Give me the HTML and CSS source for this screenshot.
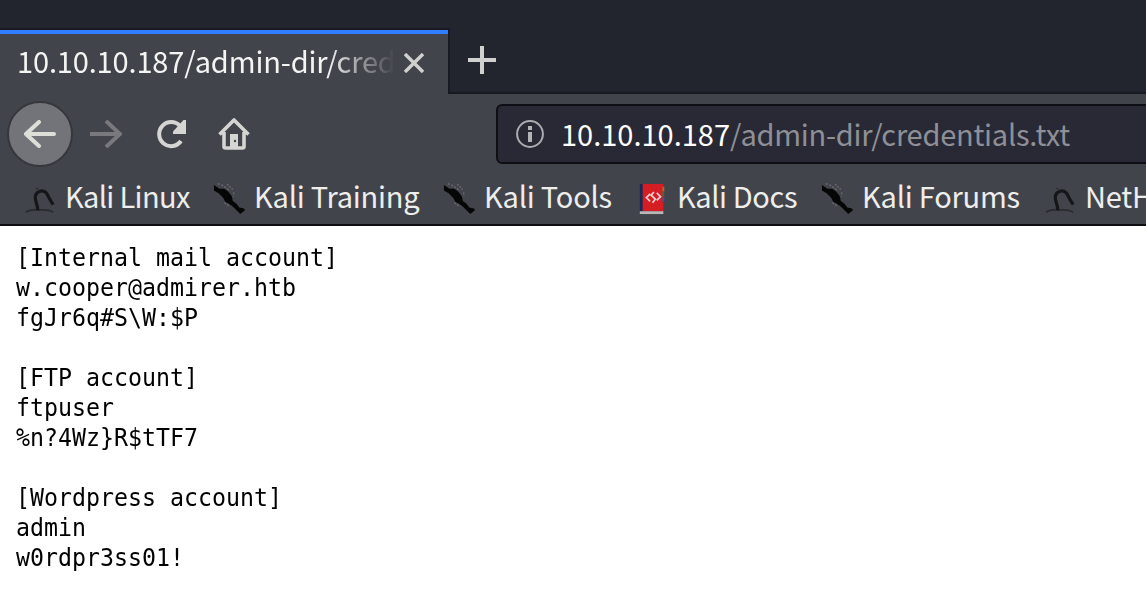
FILE: index.html
```html
<!DOCTYPE html>
<html lang="en">
<head>
<meta charset="utf-8">
<title>10.10.10.187/admin-dir/credentials.txt</title>
<link rel="stylesheet" href="styles.css">
</head>
<body>
<svg class="defs" aria-hidden="true">
  <symbol id="dragon" viewBox="0 0 34 34"><path d="M1 31q5-3 10-2.500h8q7 0 11 2.500" fill="none" stroke="#292b30" stroke-width="2"/><path d="M13.500 29C14 23 10 19 11 14c1-5 8-8 12-3 3 5 4 8 7 12" fill="none" stroke="#141618" stroke-width="3.400"/><path d="M12 5l3 3" stroke="#303238" stroke-width="1.500"/></symbol>
  <symbol id="blade" viewBox="0 0 34 34"><path d="M1 2l6 4h5l4 3 4 5 1 5 4 3 3 4 5 1 1 2-5 4-4-4-4-4-4-3-4-2-2-4-5-5-5-3z" fill="#050606"/><path d="M9 2l9 6M15 1l6 6M5 1h2M22 10v4M12 21l6 4" stroke="#686b70" stroke-width="1.500" stroke-dasharray="2 1.500" fill="none"/></symbol>
</svg>
<header class="chrome">
  <div class="tabs">
    <div class="tab">
      <span class="tab-title">10.10.10.187/admin-dir/credentials.txt</span>
      <svg class="close" viewBox="0 0 20 20"><path d="M1 1l18 18M19 1L1 19"/></svg>
    </div>
    <div class="tab-rest"><svg class="plus" viewBox="0 0 28 28"><path d="M14 0v28M0 14h28"/></svg></div>
  </div>
  <nav class="toolbar">
    <span class="back"><svg viewBox="0 0 32 28"><path d="M30 14H2M15 2L2 14l13 12"/></svg></span>
    <svg class="forward" viewBox="0 0 32 28"><path d="M0 14h30M16 1l14 13-14 13"/></svg>
    <svg class="reload" viewBox="0 0 32 30"><path d="M25 22A12 12 0 1 1 24 7" fill="none" stroke="#d5d5d3" stroke-width="4"/><path d="M30 1v14H17v-2.500L27.500 1z" fill="#d5d5d3"/></svg>
    <svg class="home" viewBox="0 0 32 32"><path d="M1.500 16.500L16 2l14.500 14.500M6 14v14.500q0 1.500 1.500 1.500h17q1.500 0 1.500-1.500V14" fill="none" stroke="#d5d5d3" stroke-width="3.600" stroke-linejoin="round"/><path d="M12 30V16h8v14z" fill="#d5d5d3"/><circle cx="17" cy="23" r="1.200" fill="#42444b"/></svg>
    <div class="address">
      <svg class="info" viewBox="0 0 28 28"><circle cx="14" cy="14" r="12.900" fill="none" stroke="#acacb0" stroke-width="2"/><path d="M12 6h4v4h-4zM12 12h4v10h-4z" fill="#b4b4b7"/></svg>
      <span class="url"><span class="host">10.10.10.187</span><span class="path">/admin-dir/credentials.txt</span></span>
    </div>
  </nav>
  <nav class="bookmarks">
    <a class="linux"><svg><use href="#dragon"/></svg><span>Kali Linux</span></a>
    <a class="training"><svg><use href="#blade"/></svg><span>Kali Training</span></a>
    <a class="tools"><svg><use href="#blade"/></svg><span>Kali Tools</span></a>
    <a class="docs"><svg viewBox="0 0 34 34"><path d="M3 1h5v30H3z" fill="#172955"/><path d="M6 1h22v29H6z" fill="#d51d24"/><path d="M3 30h25v3H3z" fill="#b9b7b9"/><path d="M28 4v5" stroke="#a96932" stroke-width="2"/><path d="M28 9v5" stroke="#357445" stroke-width="2"/><path d="M28 15v5" stroke="#3158a0" stroke-width="2"/><path d="M14 11.500l-4 4 4 4M21 10.500l4 4-4 4M18 9.500l-3 3.500 4.500 4-3 4" fill="none" stroke="#f1cfd0" stroke-width="1.800"/></svg><span>Kali Docs</span></a>
    <a class="forums"><svg><use href="#blade"/></svg><span>Kali Forums</span></a>
    <a class="net"><svg><use href="#dragon"/></svg><span>NetH</span></a>
  </nav>
</header>
<main><pre>[Internal mail account]
w.cooper@admirer.htb
fgJr6q#S\W:$P

[FTP account]
ftpuser
%n?4Wz}R$tTF7

[Wordpress account]
admin
w0rdpr3ss01!</pre></main>
</body>
</html>
```
FILE: styles.css
```css
* { box-sizing: border-box; }
body { margin: 0; height: 614px; overflow: hidden; background: #fff; font-family: "Noto Sans CJK SC", "Noto Sans", sans-serif; }
.defs { display: none; }
.chrome { height: 226px; background: #42444b; border-bottom: 2px solid #0e0f13; overflow: hidden; }
.tabs { height: 94px; padding-top: 28px; background: #23252e; display: flex; }
.tab { width: 450px; height: 66px; flex: none; display: flex; align-items: center; padding: 0 22px 0 17px; background: #42444b; border-top: 2px solid #181a21; border-right: 2px solid #181a21; box-shadow: inset 0 4px #317dff; }
.tab-title { width: 376px; flex: none; margin-top: -4px; overflow: hidden; white-space: nowrap; font-size: 29px; letter-spacing: -.15px; line-height: 44px; color: #f4f4f3; -webkit-mask-image: linear-gradient(90deg, #000 310px, transparent 378px); mask-image: linear-gradient(90deg, #000 310px, transparent 378px); }
.close { width: 20px; height: 20px; margin-left: 11px; margin-top: 2px; fill: none; stroke: #d0d0cf; stroke-width: 3.4; flex: none; }
.tab-rest { flex: 1; border-bottom: 2px solid #181a21; padding: 18px; }
.plus { display: block; width: 28px; height: 28px; fill: none; stroke: #d0d0d0; stroke-width: 4; }
.toolbar { height: 80px; display: flex; align-items: center; padding-left: 7px; }
.back { width: 66px; height: 66px; border: 2px solid #36373c; border-radius: 50%; background: #737479; display: grid; place-items: center; flex: none; }
.back svg { width: 32px; height: 28px; fill: none; stroke: #deded9; stroke-width: 4; stroke-linecap: round; }
.forward { width: 32px; height: 28px; margin-left: 17px; fill: none; stroke: #79797d; stroke-width: 4; flex: none; }
.reload { width: 32px; height: 30px; margin-left: 34px; flex: none; }
.home { width: 32px; height: 32px; margin-left: 30px; flex: none; }
.address { flex: none; width: 670px; height: 60px; margin-left: 246px; border: 2px solid #0e0f14; border-radius: 6px; background: #282935; display: flex; align-items: center; padding-left: 18px; }
.info { width: 28px; height: 28px; flex: none; }
.url { margin: -2px 0 0 17px; display: flex; font-size: 29px; line-height: 44px; white-space: nowrap; }
.host { color: #fff; }
.path { color: #8f9097; letter-spacing: -.24px; }
.bookmarks { height: 50px; display: flex; align-items: center; padding-left: 25px; font-size: 29px; line-height: 44px; letter-spacing: -.2px; color: #eeeeec; }
.bookmarks a { display: flex; align-items: center; gap: 8px; flex: none; white-space: nowrap; }
.bookmarks svg { width: 32px; height: 32px; flex: none; }
.bookmarks span { margin-top: -8px; }
.linux { width: 188px; letter-spacing: -.65px; }
.training { width: 230px; }
.training span, .tools span, .forums span { margin-left: 1px; }
.tools { width: 194px; }
.docs { width: 184px; letter-spacing: -.4px; }
.forums { width: 224px; }
pre { margin: 0; padding: 17px 16px; font: 24px/30px "DejaVu Sans Mono", monospace; color: #000; transform: scaleX(.969); transform-origin: 16px 0; }
```
